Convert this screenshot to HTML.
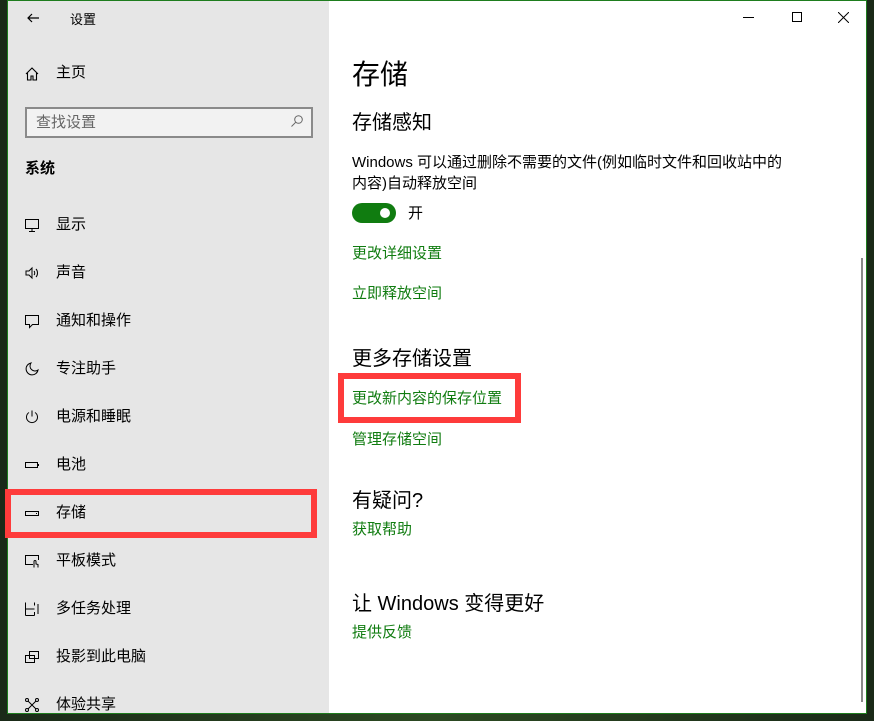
<!DOCTYPE html>
<html><head><meta charset="utf-8"><style>
*{margin:0;padding:0;box-sizing:border-box}
body{width:874px;height:721px;overflow:hidden;background:linear-gradient(90deg,#1a2a18,#2c4a22 50%,#1a2a18);font-family:"Liberation Sans","Noto Sans CJK SC",sans-serif;position:relative}
.win{position:absolute;left:7px;top:0;width:860px;height:714px;border:1px solid #1e7d1e;background:#fff;overflow:hidden}
.side{position:absolute;left:0;top:0;width:321px;height:714px;background:#e6e6e6}
.t{position:absolute;white-space:nowrap;color:#000}
.it{position:absolute;left:48px;font-size:15px;line-height:20px}
.ic{position:absolute;left:16px;width:16px;height:16px}
.g{color:#107c10;font-size:15px}
.red{position:absolute;border:6px solid #fe3b3b}
</style></head><body>
<div class="win">
<div class="side">
<svg class="ic" style="left:17px;top:9px" viewBox="0 0 16 16"><path d="M14 8H3M7 4L3 8l4 4" fill="none" stroke="#000" stroke-width="1.2"/></svg>
<div class="t" style="left:62px;top:8px;font-size:13px">设置</div>
<svg class="ic" style="top:65px" viewBox="0 0 16 16"><path d="M2 8L8 2l6 6M3.5 7v7h3.5v-4h2v4h3.5V7" fill="none" stroke="#000" stroke-width="1.1"/></svg>
<div class="t it" style="top:62px">主页</div>
<div style="position:absolute;left:17px;top:106px;width:288px;height:31px;border:2px solid #8a8a8a;background:#f2f2f2"></div>
<div class="t" style="left:28px;top:110px;font-size:15px;color:#666">查找设置</div>
<svg style="position:absolute;left:282px;top:113px;width:14px;height:14px" viewBox="0 0 14 14"><circle cx="8.5" cy="5.5" r="3.8" fill="none" stroke="#666"/><path d="M5.8 8.2L1.5 12.5" stroke="#666"/></svg>
<div class="t" style="left:17px;top:156px;font-size:15px;font-weight:bold">系统</div>
<svg class="ic" style="top:216px" viewBox="0 0 16 16"><path d="M1.5 2.5h13v9h-13zM8 11.5v3M5 14.5h6" fill="none" stroke="#000"/></svg>
<div class="t it" style="top:214px">显示</div>
<svg class="ic" style="top:264px" viewBox="0 0 16 16"><path d="M2 6h3l3-3v10l-3-3H2zM10 6c1 1 1 3 0 4M12 4c2 2 2 6 0 8" fill="none" stroke="#000"/></svg>
<div class="t it" style="top:262px">声音</div>
<svg class="ic" style="top:312px" viewBox="0 0 16 16"><path d="M1.5 2.5h13v9h-6l-3 3v-3h-4z" fill="none" stroke="#000"/></svg>
<div class="t it" style="top:310px">通知和操作</div>
<svg class="ic" style="top:360px" viewBox="0 0 16 16"><path d="M7 2a6 6 0 1 0 7 7A5 5 0 0 1 7 2z" fill="none" stroke="#000"/></svg>
<div class="t it" style="top:358px">专注助手</div>
<svg class="ic" style="top:408px" viewBox="0 0 16 16"><path d="M8 1.5v6M5 3.5a5.5 5.5 0 1 0 6 0" fill="none" stroke="#000"/></svg>
<div class="t it" style="top:406px">电源和睡眠</div>
<svg class="ic" style="top:456px" viewBox="0 0 16 16"><path d="M1.5 5.5h12v5h-12zM14.5 7v2" fill="none" stroke="#000"/></svg>
<div class="t it" style="top:454px">电池</div>
<svg class="ic" style="top:504px" viewBox="0 0 16 16"><path d="M1.5 6.5h13v4h-13z" fill="none" stroke="#000"/><path d="M12 8.5h1" stroke="#000"/></svg>
<div class="t it" style="top:502px">存储</div>
<svg class="ic" style="top:552px" viewBox="0 0 16 16"><path d="M9 11.5H1.5v-9h13V7M10 14.5v-6a1 1 0 0 1 2 0v2.5l2 .5v3" fill="none" stroke="#000"/></svg>
<div class="t it" style="top:550px">平板模式</div>
<svg class="ic" style="top:600px" viewBox="0 0 16 16"><path d="M1.5 1.5v13M1.5 8h9M10.5 1.5v3M10.5 11v3.5M1.5 14.5h9M14 3v10" fill="none" stroke="#000"/></svg>
<div class="t it" style="top:598px">多任务处理</div>
<svg class="ic" style="top:648px" viewBox="0 0 16 16"><path d="M5.5 2.5h9v7h-9zM1.5 6.5h9v7h-9z" fill="#e6e6e6" stroke="#000"/></svg>
<div class="t it" style="top:646px">投影到此电脑</div>
<svg class="ic" style="top:696px" viewBox="0 0 16 16"><circle cx="3" cy="3" r="1.5" fill="none" stroke="#000"/><circle cx="13" cy="3" r="1.5" fill="none" stroke="#000"/><circle cx="3" cy="13" r="1.5" fill="none" stroke="#000"/><circle cx="13" cy="13" r="1.5" fill="none" stroke="#000"/><path d="M4 4l8 8M12 4l-8 8" stroke="#000"/></svg>
<div class="t it" style="top:694px">体验共享</div>
</div>
<div style="position:absolute;left:735px;top:16px;width:11px;height:1px;background:#000"></div>
<div style="position:absolute;left:784px;top:11px;width:10px;height:10px;border:1px solid #000"></div>
<svg style="position:absolute;left:830px;top:11px;width:11px;height:11px" viewBox="0 0 11 11"><path d="M0 0L11 11M11 0L0 11" stroke="#000"/></svg>
<div style="position:absolute;left:853px;top:257px;width:2px;height:444px;background:#8a8a8a"></div>
<div class="t" style="left:344px;top:52px;font-size:28px">存储</div>
<div class="t" style="left:344px;top:105px;font-size:20px">存储感知</div>
<div class="t" style="left:344px;top:151px;font-size:15px;line-height:21px">Windows 可以通过删除不需要的文件(例如临时文件和回收站中的<br>内容)自动释放空间</div>
<div style="position:absolute;left:344px;top:202px;width:44px;height:20px;border-radius:10px;background:#107c10"></div>
<div style="position:absolute;left:372px;top:207px;width:10px;height:10px;border-radius:5px;background:#fff"></div>
<div class="t" style="left:400px;top:201px;font-size:15px">开</div>
<div class="t g" style="left:344px;top:241px">更改详细设置</div>
<div class="t g" style="left:344px;top:281px">立即释放空间</div>
<div class="t" style="left:344px;top:341px;font-size:20px">更多存储设置</div>
<div class="red" style="left:330px;top:372px;width:183px;height:50px"></div>
<div class="t g" style="left:344px;top:386px">更改新内容的保存位置</div>
<div class="t g" style="left:344px;top:427px">管理存储空间</div>
<div class="t" style="left:344px;top:483px;font-size:20px">有疑问?</div>
<div class="t g" style="left:344px;top:517px">获取帮助</div>
<div class="t" style="left:344px;top:586px;font-size:20px">让 Windows 变得更好</div>
<div class="t g" style="left:344px;top:620px">提供反馈</div>
</div>
<div class="red" style="left:5px;top:489px;width:312px;height:49px"></div>
</body></html>
